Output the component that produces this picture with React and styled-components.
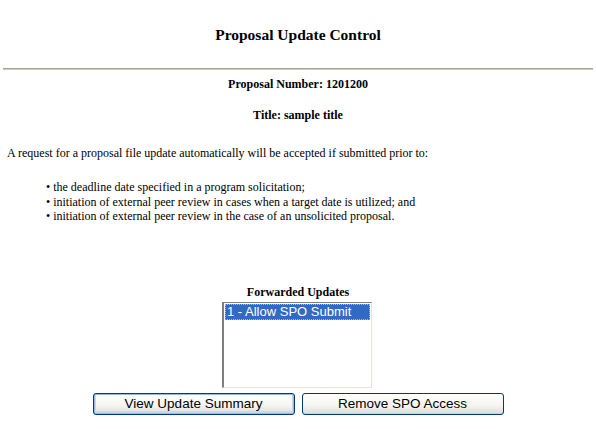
import React from 'react'
import styled, {createGlobalStyle} from 'styled-components'

const GlobalStyle = createGlobalStyle`
    html, body {
        margin: 0;
        padding: 0;
        background: #ffffff;
    }
    body {
        font-family: "Liberation Serif", "Times New Roman", serif;
        color: #000000;
    }
`

const Page = styled.div`
    width: 596px;
    padding: 0 3px;
    box-sizing: border-box;
`

const Heading = styled.h1`
    margin: 26px 0 0 0;
    font-size: 15.5px;
    line-height: 18px;
    font-weight: bold;
    text-align: center;
`

const Rule = styled.div`
    margin-top: 24px;
    height: 0;
    border-top: 1px solid #a3a293;
    border-bottom: 1px solid #cfcec4;
`

const SubHeading = styled.h2`
    margin: ${props => props.gap}px 0 0 0;
    font-size: 12px;
    line-height: 15px;
    font-weight: bold;
    text-align: center;
`

const Intro = styled.p`
    margin: 23px 0 0 0;
    padding-left: 4px;
    font-size: 12px;
    line-height: 15px;
`

const Bullets = styled.ul`
    list-style: none;
    margin: 19px 0 0 0;
    padding-left: 43px;
    font-size: 12px;
    line-height: 14.5px;

    li::before {
        content: "\\2022";
        margin-right: 3px;
    }
`

const Forwarded = styled.div`
    margin-top: 61px;
    display: flex;
    flex-direction: column;
    align-items: center;
`

const Label = styled.div`
    font-size: 12px;
    line-height: 14px;
    font-weight: bold;
`

const ListBox = styled.div`
    margin-top: 3px;
    margin-right: 2px;
    width: 150px;
    height: 86px;
    box-sizing: border-box;
    border-top: 1px solid #7f7f7f;
    border-left: 2px solid #7f7f7f;
    border-right: 1px solid #e6e3da;
    border-bottom: 1px solid #e6e3da;
    padding: 1px 1px;
    background: #ffffff;
`

const Option = styled.div`
    height: 16px;
    box-sizing: border-box;
    padding-left: 2px;
    font-family: "Liberation Sans", Arial, sans-serif;
    font-size: 13px;
    line-height: 15px;
    color: ${props => props.selected ? '#ffffff' : '#000000'};
    background: ${props => props.selected ? '#316ac5' : 'transparent'};
    outline: ${props => props.selected ? '1px dotted #9fb9e6' : 'none'};
    outline-offset: -1px;
    white-space: nowrap;
`

const Buttons = styled.div`
    margin-top: 5px;
    display: flex;
    justify-content: center;
    gap: 7px;
`

const Button = styled.button`
    width: 202px;
    height: 22px;
    box-sizing: border-box;
    border: 1px solid #003c74;
    border-radius: 3px;
    background: linear-gradient(to bottom, #ffffff 0%, #f4f4f0 60%, #dcdcd4 100%);
    box-shadow: ${props => props.focused ? 'inset 0 0 0 1px #98b8ea, inset 0 -1px 0 2px #c8d8f4' : 'inset 0 -1px 0 #d6d0c5'};
    font-family: "Liberation Sans", Arial, sans-serif;
    font-size: 13.5px;
    color: #000000;
    padding: 0;
    cursor: pointer;
`

const items = [
    'the deadline date specified in a program solicitation;',
    'initiation of external peer review in cases when a target date is utilized; and',
    'initiation of external peer review in the case of an unsolicited proposal.',
]

const App = () => {
    return (
        <Page>
            <GlobalStyle/>
            <Heading>Proposal Update Control</Heading>
            <Rule/>
            <SubHeading gap={7}>Proposal Number: 1201200</SubHeading>
            <SubHeading gap={16}>Title: sample title</SubHeading>
            <Intro>A request for a proposal file update automatically will be accepted if submitted prior to:</Intro>
            <Bullets>
                {items.map(text => <li key={text}>{text}</li>)}
            </Bullets>
            <Forwarded>
                <Label>Forwarded Updates</Label>
                <ListBox>
                    <Option selected>1 - Allow SPO Submit</Option>
                </ListBox>
                <Buttons>
                    <Button focused>View Update Summary</Button>
                    <Button>Remove SPO Access</Button>
                </Buttons>
            </Forwarded>
        </Page>
    )
}

export default App
